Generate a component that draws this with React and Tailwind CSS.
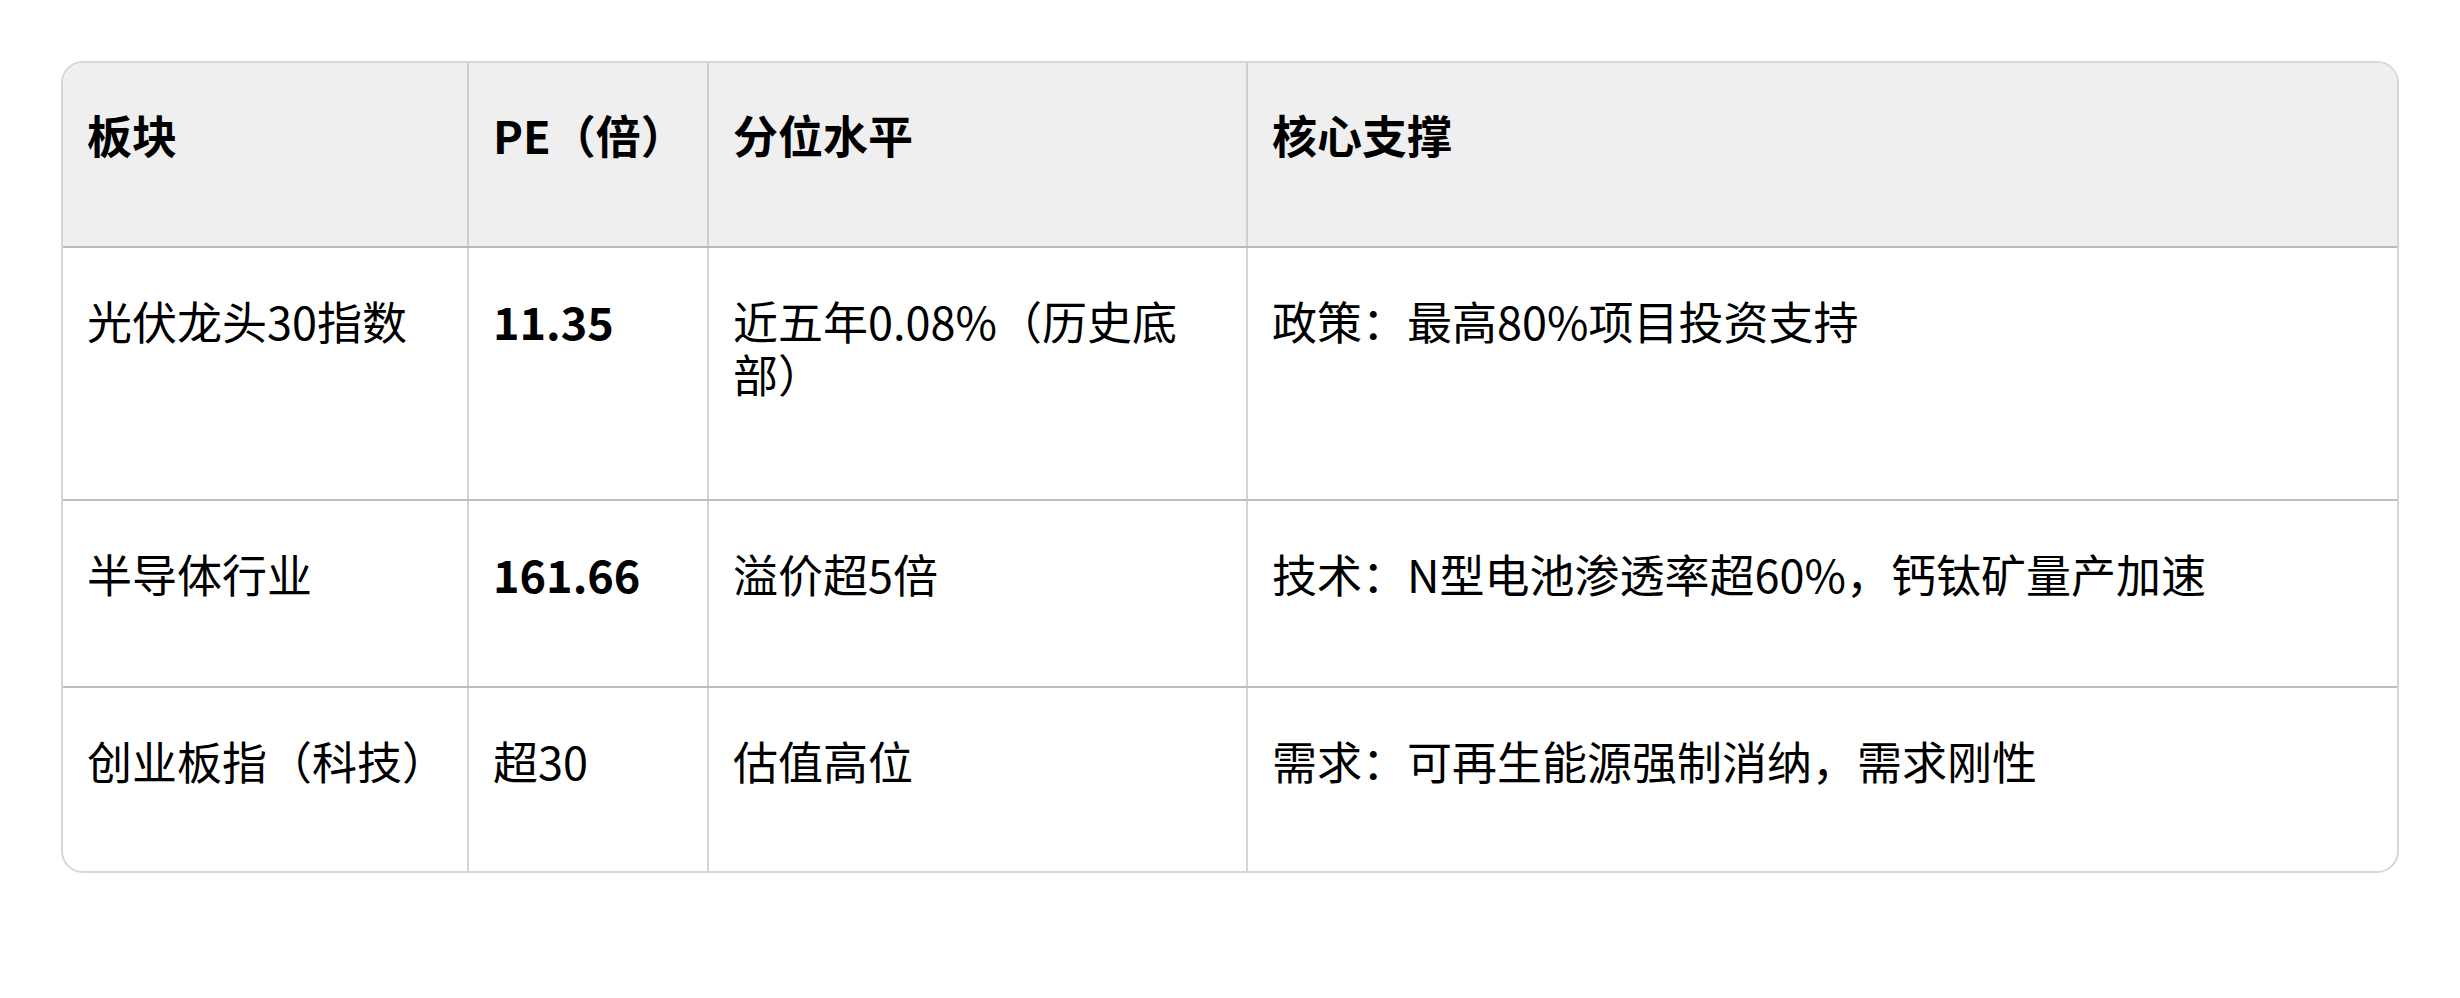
import React from "react";

const rows = [
  {
    h: "h-[253px]",
    c1: "光伏龙头30指数",
    c2: "11.35",
    bold: true,
    c3: "近五年0.08%（历史底部）",
    c4: "政策：最高80%项目投资支持",
    last: false,
  },
  {
    h: "h-[187px]",
    c1: "半导体行业",
    c2: "161.66",
    bold: true,
    c3: "溢价超5倍",
    c4: "技术：N型电池渗透率超60%，钙钛矿量产加速",
    last: false,
  },
  {
    h: "h-[183px]",
    c1: "创业板指（科技）",
    c2: "超30",
    bold: false,
    c3: "估值高位",
    c4: "需求：可再生能源强制消纳，需求刚性",
    last: true,
  },
];

export default function App() {
  return (
    <div
      className="min-h-[998px] w-[2460px] bg-white pl-[61px] pt-[61px] text-black"
      style={{ fontFamily: '"Noto Sans CJK SC", "Noto Sans", sans-serif' }}
    >
      <div className="w-[2338px] overflow-hidden rounded-[22px] border-2 border-[#d6d6d6] text-[45px] leading-[53px]">
        <div className="flex h-[185px] border-b-2 border-[#bababa] bg-[#efefef] font-bold">
          <div className="w-[404px] shrink-0 px-6 pt-[45px]">板块</div>
          <div className="w-[240px] shrink-0 border-l-2 border-[#cfcfcf] px-6 pt-[45px]">PE（倍）</div>
          <div className="w-[539px] shrink-0 border-l-2 border-[#cfcfcf] px-6 pt-[45px]">分位水平</div>
          <div className="flex-1 border-l-2 border-[#cfcfcf] px-6 pt-[45px]">核心支撑</div>
        </div>
        {rows.map((r, i) => (
          <div
            key={i}
            className={`flex ${r.h} ${r.last ? "" : "border-b-2 border-[#bfbfbf]"}`}
          >
            <div className="w-[404px] shrink-0 px-6 pt-[46px]">{r.c1}</div>
            <div className={`w-[240px] shrink-0 border-l-2 border-[#d4d4d4] px-6 pt-[46px] ${r.bold ? "font-semibold" : ""}`}>
              {r.c2}
            </div>
            <div className="w-[539px] shrink-0 border-l-2 border-[#d4d4d4] px-6 pt-[46px]">{r.c3}</div>
            <div className="flex-1 border-l-2 border-[#d4d4d4] px-6 pt-[46px]">{r.c4}</div>
          </div>
        ))}
      </div>
    </div>
  );
}
